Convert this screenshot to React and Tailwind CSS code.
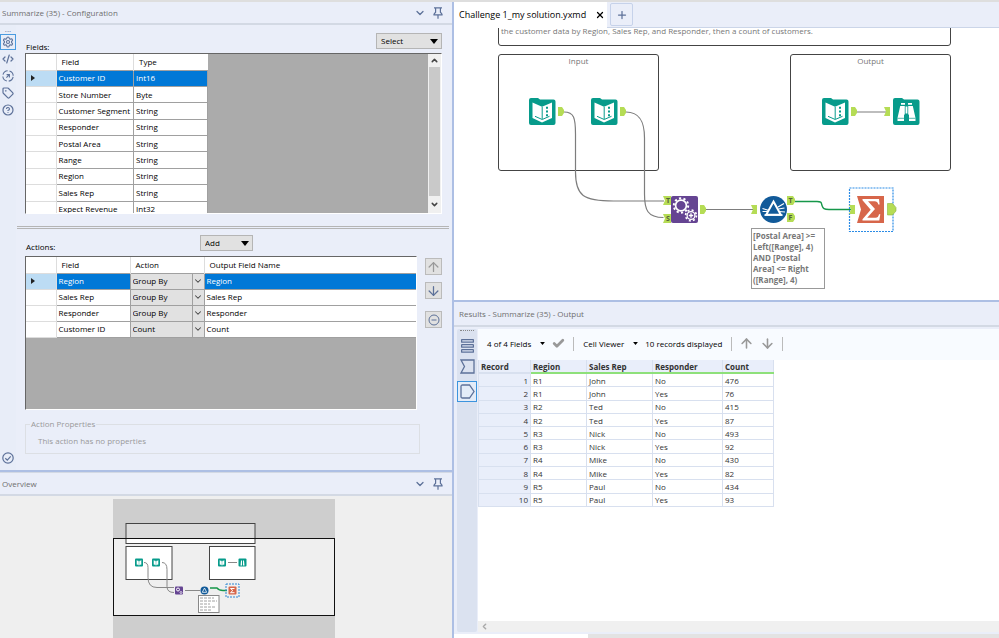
import { useState } from 'react';
import { ChevronDown, ChevronUp, ChevronLeft, Plus, X, ArrowUp, ArrowDown, Check, CircleHelp, CodeXml, Settings, Tag } from 'lucide-react';

/* ------------------------------------------------------------------ */
/* data                                                               */
/* ------------------------------------------------------------------ */

const fields = [
  ['Customer ID', 'Int16'],
  ['Store Number', 'Byte'],
  ['Customer Segment', 'String'],
  ['Responder', 'String'],
  ['Postal Area', 'String'],
  ['Range', 'String'],
  ['Region', 'String'],
  ['Sales Rep', 'String'],
  ['Expect Revenue', 'Int32'],
];

const initialActions = [
  { field: 'Region', action: 'Group By', output: 'Region' },
  { field: 'Sales Rep', action: 'Group By', output: 'Sales Rep' },
  { field: 'Responder', action: 'Group By', output: 'Responder' },
  { field: 'Customer ID', action: 'Count', output: 'Count' },
];

const records = [
  ['R1', 'John', 'No', 476],
  ['R1', 'John', 'Yes', 76],
  ['R2', 'Ted', 'No', 415],
  ['R2', 'Ted', 'Yes', 87],
  ['R3', 'Nick', 'No', 493],
  ['R3', 'Nick', 'Yes', 92],
  ['R4', 'Mike', 'No', 430],
  ['R4', 'Mike', 'Yes', 82],
  ['R5', 'Paul', 'No', 434],
  ['R5', 'Paul', 'Yes', 93],
];

/* ------------------------------------------------------------------ */
/* small icons                                                        */
/* ------------------------------------------------------------------ */

function Pin() {
  return (
    <svg width="12" height="12" viewBox="0 0 12 12" fill="none" stroke="#5d7199" strokeWidth="1.2">
      <path d="M2 .8h8M3.6.8v4.4L2 7.2v.6h8v-.6L8.4 5.2V.8M6 7.8v4" />
    </svg>
  );
}

function Triangle({ className }) {
  return (
    <svg className={className} width="8" height="5" viewBox="0 0 8 5">
      <path d="M0 0h8L4 5z" fill="#000" />
    </svg>
  );
}

function RowMarker() {
  return (
    <svg className="ml-[5px]" width="4" height="6" viewBox="0 0 4 6">
      <path d="M0 0l4 3-4 3z" fill="#222" />
    </svg>
  );
}

function Target() {
  return (
    <svg width="12" height="12" viewBox="0 0 12 12" fill="none" stroke="#5d7199" strokeWidth="1.1">
      <circle cx="6" cy="6" r="5.2" strokeDasharray="6.2 1.96" strokeDashoffset="-1" />
      <path d="M4.4 7.6l2.4-2.4M4.6 4.6h2.800v2.800" />
    </svg>
  );
}

function InputAnchorIcon() {
  return (
    <svg width="15" height="15" viewBox="0 0 15 15" fill="none" stroke="#5d7199" strokeWidth="1.3">
      <path d="M1 1h13v13H1l3.5-6.5z" />
    </svg>
  );
}

function OutputAnchorIcon() {
  return (
    <svg width="15" height="15" viewBox="0 0 15 15" fill="none" stroke="#5d7199" strokeWidth="1.3">
      <path d="M1 2.5Q1 1 2.5 1H9.500l4.500 6.500-4.500 6.500H2.500Q1 14 1 12.500z" />
    </svg>
  );
}

/* ------------------------------------------------------------------ */
/* workflow tools                                                     */
/* ------------------------------------------------------------------ */

function TextInputTool() {
  return (
    <svg width="27" height="27" viewBox="0 0 27 27">
      <path d="M2 0h7l2 1.500h13.500a2 2 0 0 1 2 2V25a2 2 0 0 1-2 2H2a2 2 0 0 1-2-2V2a2 2 0 0 1 2-2z" fill="#079b8b" />
      <path d="M3.500 4.500l9.500 4.300 10-4.300V20l-10 4.500L3.500 20z" fill="#fff" />
      <path d="M13.200 8.800V21M6 18.300l7.200 3.200 7.300-3.200" fill="none" stroke="#079b8b" />
      <path d="M17 8.700h2v2h-2zM17 12.500h2v2h-2zM17 16.300h2v2h-2z" fill="#079b8b" />
    </svg>
  );
}

function BrowseTool() {
  return (
    <svg width="27" height="27" viewBox="0 0 27 27">
      <path d="M2 0h7l2 1.500h13.500a2 2 0 0 1 2 2V25a2 2 0 0 1-2 2H2a2 2 0 0 1-2-2V2a2 2 0 0 1 2-2z" fill="#079b8b" />
      <path d="M8 5h4v1.800H8zM15 5h4v1.800h-4zM7.200 8h4.800v8.500h-1V23H4.500v-3zM15 8h4.800l2.700 12v3H16v-6.500h-1zM12.200 8.500h2.600v7h-2.600z" fill="#fff" />
      <path d="M4.500 20.300H11M16 20.300h6.500M12.200 8v8.500M14.800 8v8.500" stroke="#079b8b" strokeWidth=".7" />
    </svg>
  );
}

function AppendTool() {
  return (
    <svg width="27" height="27" viewBox="0 0 27 27">
      <rect width="27" height="27" rx="2" fill="#654492" />
      <g fill="none" stroke="#fff">
        <circle cx="10" cy="9.500" r="5.400" strokeWidth="1.700" />
        <circle cx="10" cy="9.500" r="7.200" strokeWidth="2" strokeDasharray="2.200 2.324" />
        <circle cx="20" cy="19.500" r="3.900" strokeWidth="1.300" />
        <circle cx="20" cy="19.500" r="5.400" strokeWidth="1.700" strokeDasharray="2 2.241" />
        <path d="M17.800 19.500h4.400M20 17.300v4.400" strokeWidth="1.300" />
      </g>
    </svg>
  );
}

function FilterTool() {
  return (
    <svg width="27" height="27" viewBox="0 0 27 27">
      <circle cx="13.500" cy="13.500" r="13.500" fill="#115a99" />
      <path d="M2.500 12.500L9 14.500M2.500 15.500h6M18 11l6-3.500M19 15.500l6 .5M18.500 13l6-1" stroke="#fff" strokeWidth="1.200" />
      <path d="M13.500 5.500l7.300 13.300H6.200z" fill="#115a99" stroke="#fff" strokeWidth="2" />
      <path d="M4.500 19h18" stroke="#fff" strokeWidth="1.600" />
    </svg>
  );
}

function SummarizeTool() {
  return (
    <svg width="27" height="27" viewBox="0 0 27 27">
      <path d="M0 0h27v27H0l4-13.500z" fill="#d7664a" />
      <path d="M5.500 3h16.500l.6 5.500h-1.300q-.8-3.200-3.600-3.200H11l7 7.700-7.800 8.800h8.300q2.800 0 3.500-3.600h1.300L22.300 24.500H5.500v-1.300l8.200-9.400L5.500 4.300z" fill="#fff" />
    </svg>
  );
}

/* a free canvas: every child sits at its own x/y */
function Node({ x, y, children }) {
  return (
    <div className="absolute" style={{ left: x, top: y }}>
      {children}
    </div>
  );
}

function OutAnchor({ x, y, w = 6, h = 9, label }) {
  return (
    <g>
      <path d={`M${x} ${y}h${w - 2}l2 ${h / 3}v${h / 3}l-2 ${h / 3}h-${w - 2}z`} fill="#b5dc55" />
      {label && <text x={x + 1.5} y={y + 7} fontSize="7" fontWeight="700" fill="#55633a">{label}</text>}
    </g>
  );
}

function InAnchor({ x, y, w = 6, h = 9, label }) {
  return (
    <g>
      <path d={`M${x} ${y}h${w}v${h}h-${w}l2-${h / 2}z`} fill="#b5dc55" />
      {label && <text x={x + 3} y={y + 7} fontSize="7" fontWeight="700" fill="#55633a">{label}</text>}
    </g>
  );
}

function Wires() {
  return (
    <svg className="absolute left-0 top-0" width="545" height="272" viewBox="0 0 545 272">
      <g fill="none" stroke="#7d7d7d" strokeWidth="1.200">
        <path d="M110 84c10 0 11.500 6 11.500 22v38c0 24 8 29 38 29H210" />
        <path d="M172 84c14 0 18.500 10 18.500 26v56c0 16 3 23.500 19 23.500" />
        <path d="M252 181.500h48M403 84h32" />
      </g>
      <path d="M341 173.500h22c5 0 4 1 5 4s2 4 7 4h22" fill="none" stroke="#16974a" strokeWidth="1.400" />
      {/* selection frame of the active tool */}
      <rect x="395.5" y="160" width="43.5" height="43.5" fill="none" stroke="#2b8ce6" strokeWidth="1.2" strokeDasharray="2 1" />
      <OutAnchor x={104} y={79} />
      <OutAnchor x={166} y={79} />
      <OutAnchor x={397} y={79} />
      <InAnchor x={430} y={79} />
      <InAnchor x={209} y={168} w={8} label="T" />
      <InAnchor x={209} y={186} w={8} label="S" />
      <OutAnchor x={246} y={177} />
      <InAnchor x={297} y={177} />
      <OutAnchor x={333} y={168} w={8} label="T" />
      <OutAnchor x={333} y={185} w={8} label="F" />
      <InAnchor x={395} y={177} />
      <path d="M433.500 175.500h5l3.500 4v3.500l-3.500 4h-5z" fill="#b5dc55" stroke="#8fb23c" strokeWidth=".6" />
    </svg>
  );
}

function Canvas() {
  return (
    <div className="relative h-[272px] shrink-0 overflow-hidden bg-white text-[#777]">
      <div className="absolute left-[44px] -top-[30px] h-[48px] w-[453px] rounded-[3px] border border-[#444] px-[2px] pt-[26px] text-[8px] leading-[12px] whitespace-nowrap">
        the customer data by Region, Sales Rep, and Responder, then a count of customers.
      </div>
      <div className="absolute left-[44px] top-[26px] h-[117px] w-[161px] rounded-[3px] border border-[#444] text-center text-[8px] leading-[12px]">Input</div>
      <div className="absolute left-[336px] top-[26px] h-[117px] w-[161px] rounded-[3px] border border-[#444] text-center text-[8px] leading-[12px]">Output</div>
      <Wires />
      <Node x={75} y={70}><TextInputTool /></Node>
      <Node x={137} y={70}><TextInputTool /></Node>
      <Node x={368} y={70}><TextInputTool /></Node>
      <Node x={439} y={70}><BrowseTool /></Node>
      <Node x={217} y={168}><AppendTool /></Node>
      <Node x={306} y={168}><FilterTool /></Node>
      <Node x={403} y={168}><SummarizeTool /></Node>
      <div className="absolute left-[297px] top-[200px] h-[61px] w-[74px] border border-[#999] bg-white pl-px pt-px text-[8px] leading-[11px] font-bold whitespace-nowrap">
        [Postal Area] &gt;=<br />Left([Range], 4)<br />AND [Postal<br />Area] &lt;= Right<br />([Range], 4)
      </div>
    </div>
  );
}

/* ------------------------------------------------------------------ */
/* left side                                                          */
/* ------------------------------------------------------------------ */

function PanelTitle({ children }) {
  return (
    <div className="flex h-[23px] shrink-0 items-center border-b-2 border-[#d3d9e4] pl-[2px] pr-2 text-[#6f6f6f]">
      <h2 className="flex-1 text-[8px]">{children}</h2>
      <button aria-label="Window position"><ChevronDown size={12} strokeWidth={2.5} color="#5d7199" /></button>
      <button aria-label="Pin panel" className="ml-[6px]"><Pin /></button>
    </div>
  );
}

function DropButton({ label, className, options }) {
  return (
    <div className={`relative ${className}`}>
      <select aria-label={label} className="h-[16px] w-full appearance-none border border-[#b5b5b5] bg-[#e1e1e1] pl-1 leading-[14px]">
        <option>{label}</option>
        {options.map((o) => <option key={o}>{o}</option>)}
      </select>
      <Triangle className="pointer-events-none absolute right-1 top-[6px]" />
    </div>
  );
}

function SideTools() {
  return (
    <nav className="flex w-[16px] shrink-0 flex-col items-center bg-[#e8edf8] text-[#5d7199]">
      <span className="h-[9px] text-[8px] leading-[7px]">...</span>
      <button aria-label="Configuration" className="flex h-[16px] w-[16px] items-center justify-center border border-[#4a9be0]"><Settings size={12} strokeWidth={2.2} /></button>
      <button aria-label="XML view" className="flex h-[17px] items-center"><CodeXml size={12} strokeWidth={2.4} /></button>
      <button aria-label="Navigation" className="flex h-[17px] items-center"><Target /></button>
      <button aria-label="Annotation" className="flex h-[17px] items-center"><Tag size={12} strokeWidth={2.4} /></button>
      <button aria-label="Help" className="flex h-[17px] items-center"><CircleHelp size={12} strokeWidth={2.4} /></button>
      <button aria-label="Apply" className="mt-auto mb-[6px]">
        <svg width="12" height="12" viewBox="0 0 12 12" fill="none" stroke="#5d7199" strokeWidth="1.2">
          <circle cx="6" cy="6" r="5.2" />
          <path d="M3.3 6.2l2 1.9 3.400-3.700" />
        </svg>
      </button>
    </nav>
  );
}

function FieldsGrid() {
  const [selected, setSelected] = useState(0);
  return (
    <div className="flex h-[161px] overflow-hidden border border-l-[#666] border-t-[#666] border-b-white border-r-white bg-[#ababab]">
      <div className="flex-1">
        <table className="h-[164px] w-[182px] table-fixed border-collapse bg-white text-left">
          <thead>
            <tr className="h-[16px] border-b border-[#a0a0a0]">
              <th className="w-[30px] border-r border-[#ddd] p-0" />
              <th className="border-r border-[#ddd] p-0 pl-[5px] font-normal">Field</th>
              <th className="w-[74px] p-0 pl-[5px] font-normal">Type</th>
            </tr>
          </thead>
          <tbody>
            {fields.map(([name, type], i) => (
              <tr key={name} onClick={() => setSelected(i)} className={i === selected ? 'bg-[#0078d7] text-white' : ''}>
                <td className={i === selected ? 'border border-l-0 border-[#ddd] bg-[#bcdcf4] p-0' : 'border border-l-0 border-[#ddd] p-0'}>{i === selected && <RowMarker />}</td>
                <td className="border border-[#a0a0a0] p-0 pl-[2px] whitespace-nowrap">{name}</td>
                <td className="border border-[#a0a0a0] p-0 pl-[2px]">{type}</td>
              </tr>
            ))}
          </tbody>
        </table>
      </div>
      <div className="flex w-[13px] flex-col items-center bg-[#f0f0f0]">
        <button aria-label="Scroll up" className="flex h-[13px] items-center"><ChevronUp size={9} strokeWidth={4} color="#444" /></button>
        <div className="w-[11px] flex-1 bg-[#c9c9c9]" />
        <button aria-label="Scroll down" className="flex h-[17px] items-center"><ChevronDown size={9} strokeWidth={4} color="#444" /></button>
      </div>
    </div>
  );
}

function ActionsGrid() {
  const [rows, setRows] = useState(initialActions);
  const setAction = (index, action) => setRows(rows.map((r, i) => (i === index ? { ...r, action } : r)));
  return (
    <div className="h-[154px] flex-1 border border-l-[#666] border-t-[#666] border-b-white border-r-white bg-[#ababab]">
      <table className="h-[81px] w-full table-fixed border-collapse bg-white text-left">
        <thead>
          <tr className="h-[16px] border-b border-[#a0a0a0]">
            <th className="w-[30px] border-r border-[#ddd] p-0" />
            <th className="w-[74px] border-r border-[#ddd] p-0 pl-[5px] font-normal">Field</th>
            <th className="w-[74px] border-r border-[#ddd] p-0 pl-[5px] font-normal">Action</th>
            <th className="p-0 pl-[5px] font-normal">Output Field Name</th>
          </tr>
        </thead>
        <tbody>
          {rows.map((row, i) => (
            <tr key={row.field} className={i === 0 ? 'bg-[#0078d7] text-white' : ''}>
              <td className={i === 0 ? 'border border-l-0 border-[#ddd] bg-[#bcdcf4] p-0' : 'border border-l-0 border-[#ddd] p-0'}>{i === 0 && <RowMarker />}</td>
              <td className="border border-[#a0a0a0] p-0 pl-[2px]">{row.field}</td>
              <td className="border border-[#a0a0a0] bg-[#e1e1e1] p-0 text-black">
                <div className="relative">
                  <select aria-label={`Action for ${row.field}`} value={row.action} onChange={(e) => setAction(i, e.target.value)} className="block h-[15px] w-full appearance-none pb-px pl-[2px]">
                    <option>Group By</option>
                    <option>Count</option>
                  </select>
                  <span className="pointer-events-none absolute inset-y-0 right-0 flex w-[12px] items-center justify-center border-l border-[#a0a0a0]">
                    <ChevronDown size={10} strokeWidth={2.5} color="#444" />
                  </span>
                </div>
              </td>
              <td className="border border-r-0 border-[#a0a0a0] p-0 pl-[2px]">{row.output}</td>
            </tr>
          ))}
        </tbody>
      </table>
    </div>
  );
}

function Configuration() {
  return (
    <section className="flex flex-1 flex-col overflow-hidden">
      <PanelTitle>Summarize (35) - Configuration</PanelTitle>
      <div className="flex flex-1">
        <SideTools />
        <div className="flex-1 pl-[9px] pr-[10px] pt-2">
          <div className="flex h-[20px] items-start justify-between">
            <span className="pl-px pt-2 leading-[12px]">Fields:</span>
            <DropButton label="Select" className="w-[66px]" options={['All', 'None']} />
          </div>
          <FieldsGrid />
          <hr className="-ml-2 mt-[12px] -mr-[7px] h-[3px] border-y border-x-0 border-[#b5b5b5]" />
          <div className="mt-[6px] flex h-[21px] items-start">
            <span className="w-[175px] pl-px pt-[6px] leading-[12px]">Actions:</span>
            <DropButton label="Add" className="w-[53px]" options={['Group By', 'Count']} />
          </div>
          <div className="flex items-start">
            <ActionsGrid />
            <div className="ml-2 mt-[2px] flex flex-col">
              <button aria-label="Move up" className="flex h-[17px] w-[17px] items-center justify-center border border-[#bbb] bg-[#e1e1e1]"><ArrowUp size={16} strokeWidth={2} color="#999" /></button>
              <button aria-label="Move down" className="mt-[7px] flex h-[17px] w-[17px] items-center justify-center border border-[#bbb] bg-[#e1e1e1]"><ArrowDown size={16} strokeWidth={2} color="#5d7199" /></button>
              <button aria-label="Remove" className="mt-[12px] flex h-[17px] w-[17px] items-center justify-center border border-[#bbb] bg-[#e1e1e1]">
                <svg width="12" height="12" viewBox="0 0 12 12" fill="none" stroke="#5d7199"><circle cx="6" cy="6" r="5" /><path d="M3.5 6h5" /></svg>
              </button>
            </div>
          </div>
          <fieldset className="mr-[22px] mt-2 h-[36px] border border-[#dcdfe4] px-3 text-[#999]">
            <legend className="-ml-2 px-px leading-[12px]">Action Properties</legend>
            <p className="leading-[22px]">This action has no properties</p>
          </fieldset>
        </div>
      </div>
    </section>
  );
}

function MiniTool({ x, y, color, children }) {
  return (
    <g transform={`translate(${x} ${y})`}>
      <rect width="8" height="8" rx="1" fill={color} />
      {children}
    </g>
  );
}

function Book() {
  return <path d="M1.500 1.500L4 2.500l2.500-1v4.500L4 7 1.500 6zM4 2.500v4.500" fill="#fff" stroke="#079b8b" strokeWidth=".4" />;
}

function Overview() {
  return (
    <section className="flex h-[168px] shrink-0 flex-col border-t-2 border-[#adbfe4]">
      <div className="border-t border-[#d3d9e4]">
        <PanelTitle>Overview</PanelTitle>
      </div>
      <div className="flex flex-1 justify-center overflow-hidden bg-[#efefef] pt-[3px] pr-1">
        <svg width="222" height="139" viewBox="0 0 222 139">
          <rect width="222" height="139" fill="#cecece" />
          <rect x=".5" y="39.500" width="221" height="77" fill="#efefef" />
          <rect x="13" y="24.500" width="129" height="20" fill="#dcdcdc" />
          <rect x="13" y="40" width="129" height="5" fill="#fff" />
          <g stroke="#444">
            <rect x="13" y="24.500" width="129" height="20" fill="none" />
            <rect x="13" y="47.500" width="46" height="33" fill="#fff" />
            <rect x="96.500" y="47.500" width="45.500" height="33" fill="#fff" />
          </g>
          <rect x=".5" y="39.500" width="221" height="77" fill="none" stroke="#111" />
          <g fill="none" stroke="#888">
            <path d="M31 63.500q4 0 4 5v10q0 10 9 10h17M49 63.500q5 0 5 7v17q0 6 7 6M72 91.500h15M115 63.500h9" />
          </g>
          <path d="M97 89h7q2 2.500 6 2.500h4" fill="none" stroke="#16974a" strokeWidth="1.300" />
          <MiniTool x={22} y={59.5} color="#079b8b"><Book /></MiniTool>
          <MiniTool x={39} y={59.5} color="#079b8b"><Book /></MiniTool>
          <MiniTool x={105} y={59.5} color="#079b8b"><Book /></MiniTool>
          <MiniTool x={125.5} y={59.5} color="#079b8b"><path d="M2 7l.5-5h1v5M6 7l-.5-5h-1v5" fill="#fff" /></MiniTool>
          <MiniTool x={62} y={87.5} color="#654492"><circle cx="3" cy="3" r="1.500" stroke="#fff" fill="none" /><circle cx="6" cy="6" r="1" stroke="#fff" fill="none" strokeWidth=".7" /></MiniTool>
          <circle cx="91.500" cy="91.500" r="4" fill="#115a99" />
          <path d="M91.500 89l2.200 4.300h-4.400z" fill="none" stroke="#fff" strokeWidth=".8" />
          <MiniTool x={115.5} y={87.5} color="#d7664a"><path d="M6 2H2l2.300 2L2 6.200h4" fill="none" stroke="#fff" /></MiniTool>
          <rect x="113" y="85" width="13" height="13" fill="none" stroke="#2f86d2" strokeDasharray="2 1" />
          <rect x="85.500" y="96.500" width="20.500" height="17" fill="#fff" stroke="#888" />
          <path d="M87 99h14M87 102h17M87 105h10M87 108h15M87 111h12" stroke="#888" strokeDasharray="3 1" strokeWidth=".8" />
        </svg>
      </div>
    </section>
  );
}

/* ------------------------------------------------------------------ */
/* results                                                            */
/* ------------------------------------------------------------------ */

function Results() {
  return (
    <section className="flex flex-1 flex-col border-t-2 border-[#adbfe4]">
      <div className="flex h-[25px] shrink-0 items-center border-b-2 border-[#d3d9e4] pl-[5px] text-[8px] text-[#6f6f6f]">
        <h2>Results - Summarize (35) - Output</h2>
      </div>
      <div className="flex flex-1 pt-[2px] pl-[3px]">
        <nav className="mr-px flex w-[20px] flex-col items-center rounded-[2px] bg-[#dbe2f0]">
          <span className="mt-px w-[14px] border-t border-dotted border-[#888]" />
          <button aria-label="Messages" className="mt-2">
            <svg width="13" height="14" viewBox="0 0 13 14" fill="none" stroke="#5d7199" strokeWidth="1.300">
              <rect x=".6" y=".6" width="11.800" height="2.600" rx=".5" /><rect x=".6" y="5.600" width="11.800" height="2.600" rx=".5" /><rect x=".6" y="10.600" width="11.800" height="2.600" rx=".5" />
            </svg>
          </button>
          <button aria-label="Input" className="mt-[6px]"><InputAnchorIcon /></button>
          <button aria-label="Output" className="mt-[7px] flex h-[21px] w-[20px] items-center justify-center border border-[#3c94de] bg-[#e4ecf8]"><OutputAnchorIcon /></button>
        </nav>
        <div className="flex flex-1 flex-col bg-white">
          <div className="flex h-[31px] shrink-0 items-center bg-[#f8fbff] pb-[2px] pl-[9px]">
            <button className="flex items-center">4 of 4 Fields<Triangle className="ml-[9px] h-[3px] w-[5px]" /></button>
            <button aria-label="Apply fields" className="ml-[7px]"><Check size={13} strokeWidth={5} color="#999" /></button>
            <span className="ml-2 h-[14px] border-l border-[#bbb]" />
            <button className="ml-[9px] flex items-center">Cell Viewer<Triangle className="ml-[9px] h-[3px] w-[5px]" /></button>
            <span className="ml-[7px]">10 records displayed</span>
            <span className="ml-[9px] h-[14px] border-l border-[#bbb]" />
            <button aria-label="Previous" className="ml-[7px]"><ArrowUp size={15} strokeWidth={2.5} color="#999" /></button>
            <button aria-label="Next" className="ml-[6px]"><ArrowDown size={15} strokeWidth={2.5} color="#999" /></button>
            <span className="ml-[7px] h-[14px] border-l border-[#bbb]" />
          </div>
          <table className="h-[147px] w-[296px] table-fixed border-collapse text-left text-[8px] leading-[11px] text-[#333]">
            <thead>
              <tr className="h-[13px] bg-[#e9eefa]">
                <th className="w-[52px] border-x border-b-2 border-[#d8e0ef] p-0 pl-[2px]">Record</th>
                <th className="w-[56px] border-x border-b-2 border-x-[#d8e0ef] border-b-[#8ee07a] p-0 pl-[2px]">Region</th>
                <th className="w-[66px] border-x border-b-2 border-x-[#d8e0ef] border-b-[#8ee07a] p-0 pl-[2px]">Sales Rep</th>
                <th className="w-[70px] border-x border-b-2 border-x-[#d8e0ef] border-b-[#8ee07a] p-0 pl-[2px]">Responder</th>
                <th className="border-x border-b-2 border-x-[#d8e0ef] border-b-[#8ee07a] p-0 pl-[2px]">Count</th>
              </tr>
            </thead>
            <tbody>
              {records.map((record, i) => (
                <tr key={i}>
                  <td className="border border-[#d8e0ef] bg-[#e9eefa] p-0 pr-[2px] text-right">{i + 1}</td>
                  {record.map((value, c) => (
                    <td key={c} className="border border-[#d8e0ef] p-0 pl-[2px]">{value}</td>
                  ))}
                </tr>
              ))}
            </tbody>
          </table>
          <div className="mt-auto flex h-[11px] items-center bg-[#f0f0f0] pl-[2px]">
            <button aria-label="Scroll left"><ChevronLeft size={9} strokeWidth={4} color="#aaa" /></button>
          </div>
        </div>
      </div>
      <div className="mt-[2px] flex h-1">
        <div className="w-[134px] bg-white" />
        <div className="flex-1 bg-[#e3e3e3]" />
      </div>
    </section>
  );
}

/* ------------------------------------------------------------------ */
/* page                                                               */
/* ------------------------------------------------------------------ */

export default function App() {
  return (
    <div className="flex h-screen overflow-hidden border-t-2 border-[#dedede] bg-[#eaeef9] font-['Open_Sans','Noto_Sans',sans-serif] text-[8px] text-black">
      <div className="flex w-[454px] shrink-0 flex-col border-r-2 border-[#adbfe4]">
        <Configuration />
        <Overview />
      </div>
      <main className="flex min-w-0 flex-1 flex-col">
        <div className="flex h-[26px] shrink-0 items-stretch border-b border-[#cbd5e8]">
          <div className="-mb-px flex w-[153px] items-center justify-between bg-white pl-[5px] pr-[2px] text-[9px]">
            <span>Challenge 1_my solution.yxmd</span>
            <button aria-label="Close tab"><X size={10} strokeWidth={3} /></button>
          </div>
          <button aria-label="New tab" className="my-px ml-[3px] flex w-[23px] items-center justify-center rounded-[2px] border border-[#c6d2ea]"><Plus size={12} strokeWidth={2.5} color="#5d7199" /></button>
        </div>
        <Canvas />
        <Results />
      </main>
    </div>
  );
}
